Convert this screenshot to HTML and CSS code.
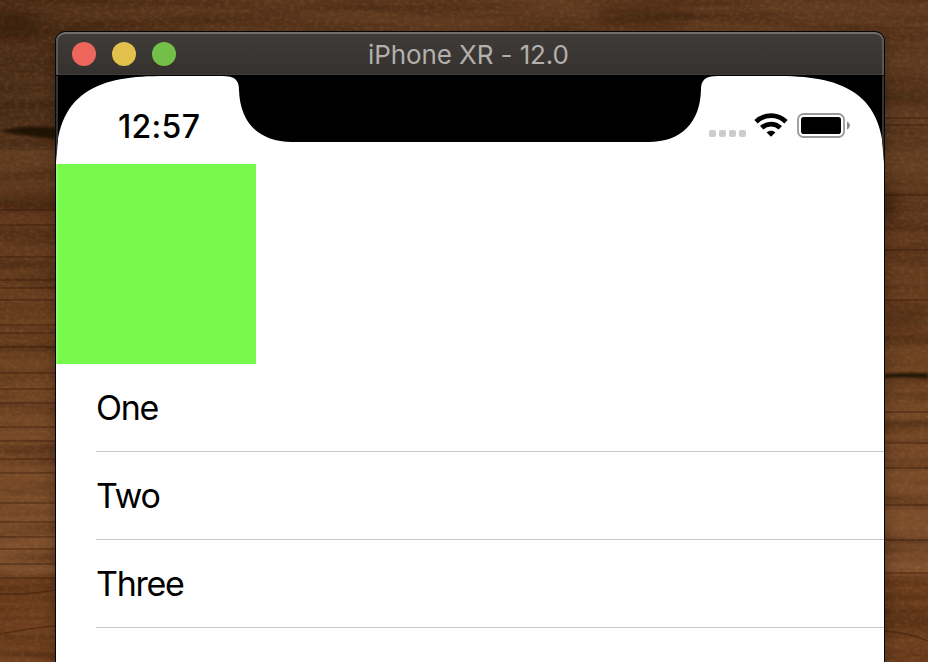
FILE: index.html
```html
<!DOCTYPE html>
<html lang="en">
<head>
<meta charset="utf-8">
<title>iPhone XR - 12.0</title>
<link rel="stylesheet" href="styles.css">
</head>
<body>
<svg class="wood" width="928" height="662" viewBox="0 0 928 662" aria-hidden="true">
  <defs>
    <linearGradient id="tone" x1="0" y1="0" x2="0" y2="1">
      <stop offset="0" stop-color="#5f3a1f"/>
      <stop offset=".17" stop-color="#5c3a20"/>
      <stop offset=".26" stop-color="#633e21"/>
      <stop offset=".34" stop-color="#5f371c"/>
      <stop offset=".5" stop-color="#6a4020"/>
      <stop offset=".7" stop-color="#784a28"/>
      <stop offset=".86" stop-color="#80502e"/>
      <stop offset=".875" stop-color="#6a3c1c"/>
      <stop offset="1" stop-color="#714120"/>
    </linearGradient>
    <linearGradient id="corner" x1="0" y1="0" x2="1" y2="0">
      <stop offset="0" stop-color="#1c0d02" stop-opacity=".25"/>
      <stop offset=".22" stop-color="#1c0d02" stop-opacity=".08"/>
      <stop offset=".5" stop-color="#1c0d02" stop-opacity="0"/>
    </linearGradient>
    <filter id="grain" x="0" y="0" width="100%" height="100%" color-interpolation-filters="sRGB">
      <feTurbulence type="fractalNoise" baseFrequency=".005 .07" numOctaves="4" seed="7"/>
      <feColorMatrix values="0 0 0 0 .15  0 0 0 0 .06  0 0 0 0 0  .8 0 0 0 -.32"/>
    </filter>
    <filter id="fiber" x="0" y="0" width="100%" height="100%" color-interpolation-filters="sRGB">
      <feTurbulence type="fractalNoise" baseFrequency=".2 .3" numOctaves="2" seed="3"/>
      <feColorMatrix values="0 0 0 0 .85  0 0 0 0 .6  0 0 0 0 .35  .3 0 0 0 -.13"/>
    </filter>
    <filter id="soft" x="-10%" y="-60%" width="120%" height="220%"><feGaussianBlur stdDeviation="1"/></filter>
    <filter id="haze" x="-40%" y="-60%" width="180%" height="220%"><feGaussianBlur stdDeviation="7"/></filter>
  </defs>
  <rect width="928" height="662" fill="url(#tone)"/>
  <rect width="928" height="150" fill="url(#corner)"/>
  <rect width="928" height="662" filter="url(#grain)"/>
  <rect width="928" height="662" filter="url(#fiber)"/>
  <g fill="#201005" opacity=".4" filter="url(#haze)">
    <ellipse cx="645" cy="18" rx="50" ry="7"/>
    <ellipse cx="10" cy="25" rx="30" ry="12"/>
    <ellipse cx="898" cy="96" rx="50" ry="6"/>
    <ellipse cx="888" cy="205" rx="9" ry="16"/>
    <ellipse cx="905" cy="320" rx="25" ry="7"/>
    <ellipse cx="35" cy="200" rx="45" ry="7"/>
  </g>
  <path class="split" d="M0 131 Q28 124 56 128 V139 Q30 137 0 131Z" filter="url(#soft)"/>
  <path class="split" d="M884 374 Q905 372 928 373 V379 Q904 377 884 378Z" filter="url(#soft)"/>
  <g class="streaks">
    <path d="M0 210H56M0 225H56M0 257H56M0 280H56M0 288H56M0 300H56M0 325H56M0 333H56M0 347H56M0 373H56M0 389H56M0 403H56M0 427H56M0 441H56M0 459H56M0 473H56M0 503H56M0 522H56M0 537H56M0 549H56M0 564H56"/>
    <path d="M0 578H56M0 594Q28 595 56 590M0 634Q30 628 56 626"/>
    <path d="M884 118H928M884 125H928M884 195H928M884 250H928M884 300H928M884 412H928M884 443H928M884 468H928M884 505H928M884 540H928M884 573H928"/>
    <path d="M884 631Q910 633 928 641"/>
  </g>
</svg>
<main class="window">
  <header class="titlebar">
    <div class="lights"><i class="close"></i><i class="minimize"></i><i class="zoom"></i></div>
    <h1>iPhone XR - 12.0</h1>
  </header>
  <section class="screen">
    <div class="statusbar">
      <svg class="bezel" width="828" height="88" viewBox="0 0 828 88" aria-hidden="true">
        <path d="M0 0H110C75 0 50 3 29 17C9 31 0 54 0 88Z"/>
        <path d="M828 0H718C753 0 778 3 799 17C819 31 828 54 828 88Z"/>
        <path d="M166 0C179 0 183 4 183 14C184 46 202 66 236 66H592C626 66 644 46 645 14C645 4 649 0 662 0Z"/>
        <path class="edge" d="M0 0H2V65L0 86ZM828 0H826V65L828 86Z"/>
      </svg>
      <time>12:57</time>
      <div class="indicators">
        <div class="signal"><i></i><i></i><i></i><i></i></div>
        <svg class="wifi" width="34" height="24" viewBox="0 0 34 24">
          <g fill="none" stroke="#000" stroke-width="4.8">
            <path d="M2 8.8C10.5 .6 23.5 .6 32 8.8"/>
            <path d="M7.7 14.8C13 9.8 21 9.8 26.3 14.8"/>
          </g>
          <path d="M17 23.8L12.6 19.4C15 17.1 19 17.1 21.4 19.4Z"/>
        </svg>
        <svg class="battery" width="54" height="26" viewBox="0 0 54 26">
          <rect x="1" y="1" width="46" height="23" rx="5.5" fill="none" stroke="#999" stroke-width="1.8"/>
          <rect x="4" y="4" width="40" height="17" rx="2.8"/>
          <path d="M50 8.5C53.8 10 53.8 15 50 16.5Z" fill="#8c8c8c"/>
        </svg>
      </div>
    </div>
    <div class="box"></div>
    <ul class="list">
      <li>One</li>
      <li>Two</li>
      <li>Three</li>
    </ul>
  </section>
</main>
</body>
</html>
```
FILE: styles.css
```css
* { box-sizing: border-box; }
body {
  margin: 0;
  height: 662px;
  overflow: hidden;
  background: #653d20;
  font-family: Inter, "Liberation Sans", sans-serif;
}
.wood { position: absolute; inset: 0; z-index: -1; }
.split { fill: #160a03; opacity: .8; }
.streaks { fill: none; stroke: #2f1606; stroke-width: 1.6; opacity: .42; }

.window {
  width: 830px;
  height: 650px;
  margin: 31px 0 0 55px;
  display: flex;
  flex-direction: column;
  border: 1px solid #080604;
  border-radius: 10px 10px 0 0;
  overflow: hidden;
  background: #000;
  box-shadow: 0 8px 16px rgba(0, 0, 0, .3);
}
.titlebar {
  flex: none;
  height: 43px;
  display: grid;
  grid-template-columns: 1fr auto 1fr;
  align-items: center;
  padding: 1px 16px 0;
  border-radius: 9px 9px 0 0;
  background: linear-gradient(#403c39, #35312e);
  box-shadow: inset 0 2px 0 #72706d, inset 2px 0 0 #5a5754, inset -2px 0 0 #5a5754, inset 0 -1px 0 #403c39;
}
.titlebar h1 {
  margin: 1px 3px 0 0;
  grid-column: 2;
  font-size: 26px;
  font-weight: 400;
  line-height: 32px;
  letter-spacing: -.1px;
  color: #b3afac;
  white-space: nowrap;
}
.lights { display: flex; gap: 16px; }
.lights i { width: 24px; height: 24px; border-radius: 50%; }
.close { background: #ee655b; }
.minimize { background: #e1c04c; }
.zoom { background: #74bf47; }

.screen {
  flex: 1;
  margin-top: 1px;
  background: #fff;
}
.statusbar {
  height: 88px;
  position: relative;
  display: flex;
  justify-content: space-between;
  padding: 32px 33px 0 62px;
}
.bezel { position: absolute; left: 0; top: 0; }
.edge { fill: #333; }
.statusbar time {
  padding-top: 1px;
  font-size: 32px;
  font-weight: 530;
  line-height: 36px;
  letter-spacing: .3px;
}
.indicators { display: flex; height: 36px; padding-top: 5px; }
.signal { display: flex; gap: 3px; padding-top: 17px; margin-right: 8px; }
.signal i { width: 7px; height: 7px; border-radius: 2px; background: #ccc; }
.wifi { margin-right: 9px; }
.box { width: 200px; height: 200px; background: #78fa4c; box-shadow: inset 2px 0 0 #90fb6c; }
.list { margin: 0; padding: 0 0 0 40px; list-style: none; }
.list li {
  height: 88px;
  border-bottom: 1px solid #c8c7cc;
  font-size: 34px;
  line-height: 87px;
  letter-spacing: -1.3px;
}
```
